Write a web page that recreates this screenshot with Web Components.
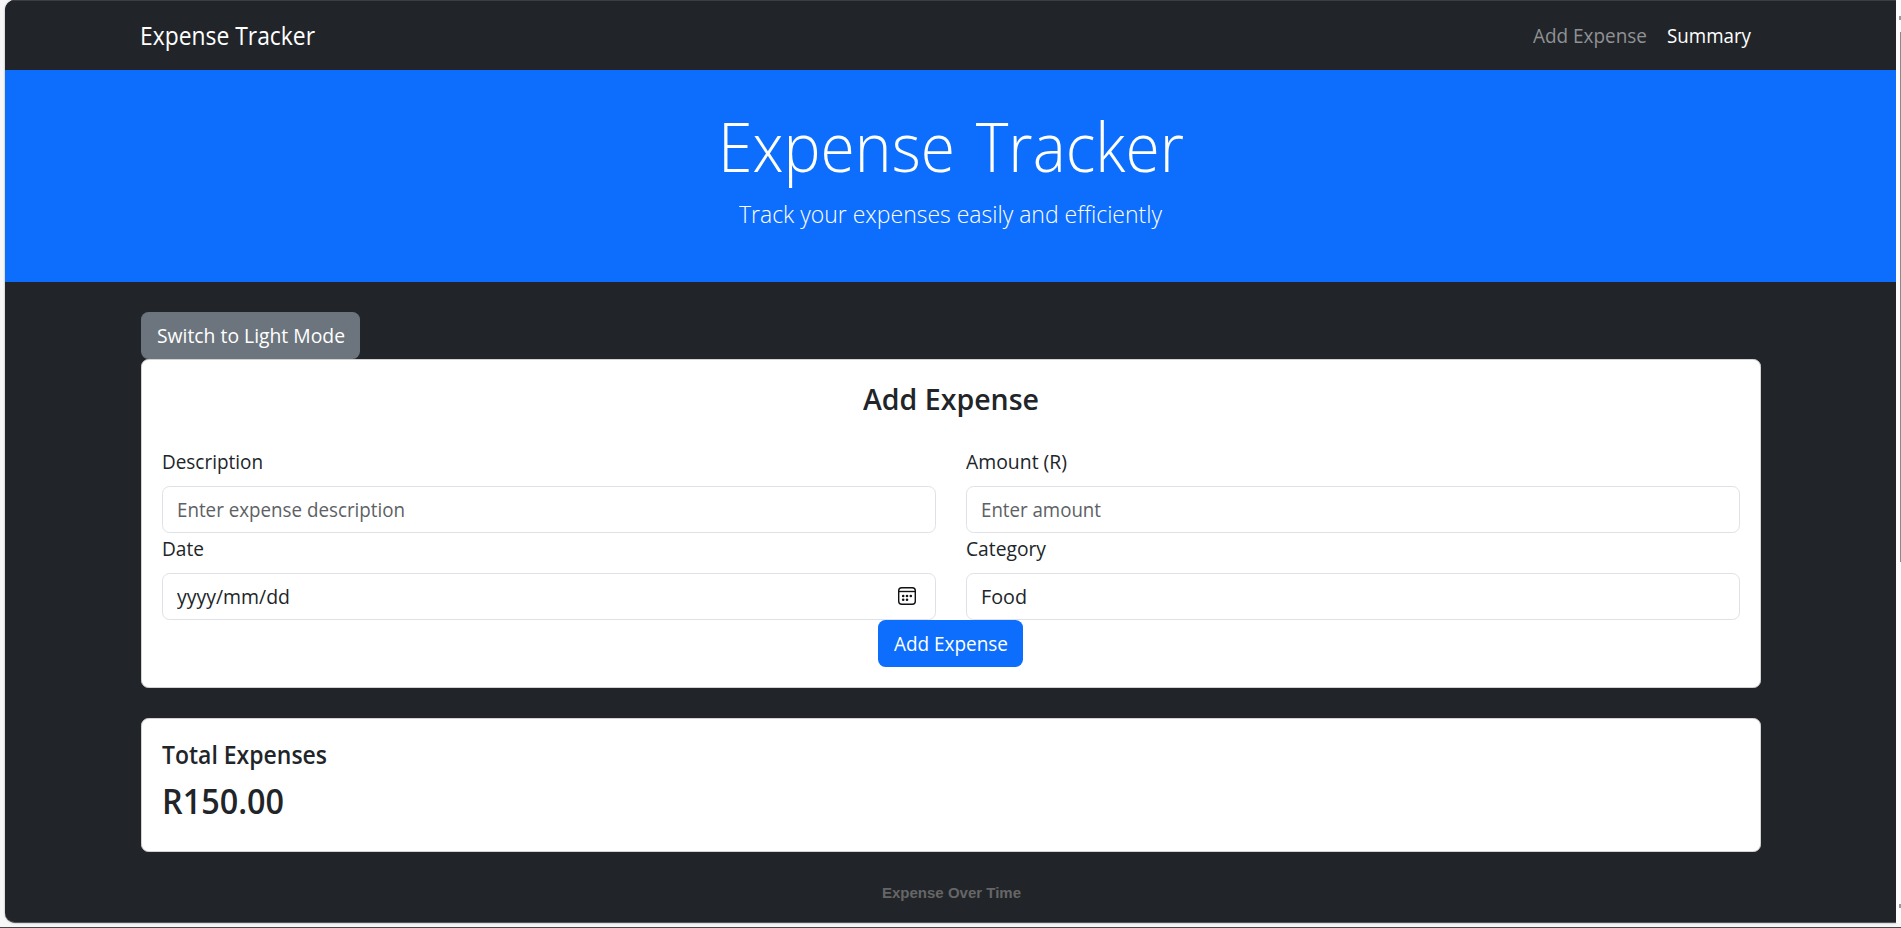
<!DOCTYPE html>
<html lang="en">
<head>
<meta charset="utf-8">
<title>Expense Tracker</title>
<style>
html,body{margin:0;height:100%;overflow:hidden;background:#f9f9f9}
body{font-family:"Open Sans","Noto Sans",sans-serif;font-size:19.6px;color:#212529}
</style>
</head>
<body>
<expense-app></expense-app>
<script>
const define=(name,html,setup)=>{
  const t=document.createElement('template');t.innerHTML=html;
  customElements.define(name,class extends HTMLElement{
    constructor(){super();this.attachShadow({mode:'open'}).append(t.content.cloneNode(true));}
    connectedCallback(){if(setup)setup(this);}
  });
};
// One line of text, condensed horizontally to span the given width.
define('fit-text','<style>:host{display:inline-block;white-space:nowrap;text-align:left}span{display:inline-block;transform-origin:0 50%}</style><span><slot></slot></span>',el=>{
  const w=+el.getAttribute('w'),s=el.shadowRoot.querySelector('span');
  el.style.width=w+'px';
  s.style.transform='scaleX('+w/s.getBoundingClientRect().width+')';
});
define('nav-bar',`<style>
:host{display:flex;justify-content:space-between;align-items:center;height:70px;box-sizing:border-box;padding:0 145px 0 135px;background:#212529;border-top:1px solid #3b3f42;color:#fff}
.brand{font-size:24.6px;line-height:38px}
nav{display:flex;gap:20px}
.muted{color:#909294}
</style>
<div class="brand"><fit-text w="175">Expense Tracker</fit-text></div>
<nav><fit-text class="muted" w="114">Add Expense</fit-text><fit-text w="84">Summary</fit-text></nav>`);
define('hero-banner',`<style>
:host{display:block;height:212px;box-sizing:border-box;padding-top:27px;background:#0d6efd;color:#fff;text-align:center;font-weight:300}
h1{margin:0;font-weight:300;font-size:69px;line-height:96px;word-spacing:5px}
p{margin:0;padding-top:2px;font-size:24.6px;line-height:38px}
</style>
<h1><fit-text w="466">Expense Tracker</fit-text></h1>
<p><fit-text w="423">Track your expenses easily and efficiently</fit-text></p>`);
define('ui-button',`<style>
:host{display:inline-flex;align-items:center;justify-content:center;height:47px;border-radius:7.5px;background:var(--bg,#0d6efd);color:#fff;box-sizing:border-box}
</style><slot></slot>`);
define('ui-card',`<style>
:host{display:block;box-sizing:border-box;background:#fff;border:1px solid #d3d3d4;border-radius:7.5px;padding:0 20px}
</style><slot></slot>`);
define('form-field',`<style>
:host{display:block;height:87px}
.label{height:40px;line-height:32px;margin-left:-.5px}
.box{display:flex;align-items:center;justify-content:space-between;height:47px;box-sizing:border-box;border:1px solid #dee2e6;border-radius:7.5px;padding:0 18px 0 14px;color:var(--c,#212529)}
</style><div class="label"><slot name="label"></slot></div><div class="box"><slot></slot></div>`);
define('calendar-icon',`<style>:host{display:block;width:20px;height:20px;margin-top:-2px}svg{display:block}</style>
<svg width="20" height="20" viewBox="0 0 20 20"><rect x="1.7" y="1.7" width="16.6" height="16.6" rx="3" fill="none" stroke="#111" stroke-width="1.4"/><path d="M2 5.5H18" stroke="#111" stroke-width="1.4"/><g fill="#111"><circle cx="6.2" cy="10" r="1.3"/><circle cx="10" cy="10" r="1.3"/><circle cx="13.8" cy="10" r="1.3"/><circle cx="6.2" cy="13.8" r="1.3"/><circle cx="10" cy="13.8" r="1.3"/></g></svg>`);
define('expense-form',`<style>
:host{display:block}
ui-card{height:329px}
h2{margin:0;padding-top:16px;height:86px;box-sizing:border-box;text-align:center;font-size:29px;line-height:45px;font-weight:600}
.grid{display:grid;grid-template-columns:1fr 1fr;column-gap:30px}
.hint{--c:#5d6165}
.action{display:flex;justify-content:center;padding-right:1px}
ui-button{width:145px}
</style>
<ui-card>
<h2><fit-text w="176">Add Expense</fit-text></h2>
<div class="grid">
<form-field class="hint"><fit-text slot="label" w="101" style="color:#212529">Description</fit-text><fit-text w="228">Enter expense description</fit-text></form-field>
<form-field class="hint"><fit-text slot="label" w="101" style="color:#212529">Amount (R)</fit-text><fit-text w="120">Enter amount</fit-text></form-field>
<form-field><fit-text slot="label" w="42">Date</fit-text><fit-text w="113">yyyy/mm/dd</fit-text><calendar-icon></calendar-icon></form-field>
<form-field><fit-text slot="label" w="80">Category</fit-text><fit-text w="46">Food</fit-text></form-field>
</div>
<div class="action"><ui-button><fit-text w="114">Add Expense</fit-text></ui-button></div>
</ui-card>`);
define('expense-total',`<style>
:host{display:block;margin-top:30px}
ui-card{height:134px}
h5,h3{margin:0 0 0 -.5px;font-weight:600}
h5{padding-top:19px;font-size:24.3px;line-height:34px}
h3{font-size:34px;line-height:48px;padding-top:5px}
</style>
<ui-card><h5><fit-text w="165">Total Expenses</fit-text></h5><h3><fit-text w="122">R150.00</fit-text></h3></ui-card>`);
define('chart-title',`<style>
:host{display:block;text-align:center;margin-top:31px;font:bold 15px/20px "Liberation Sans",Arial,sans-serif;color:#666}
</style><fit-text w="139">Expense Over Time</fit-text>`);
define('scroll-edge',`<style>
:host{display:flex;flex-direction:column;align-items:flex-end;width:5px;height:923px;box-sizing:border-box;padding:16px 0 15px;background:#fcfcfc}
i{width:2px;height:4px;background:#999}
.thumb{width:1px;height:530px;margin:12px 0 auto;background:#8a8a8a}
</style><i></i><i class="thumb"></i><i></i>`);
define('expense-app',`<style>
:host{display:flex;height:928px;box-sizing:border-box;padding:0 0 4px 5px;border-bottom:1px solid #47484a;background:#f7f7f7}
.window{flex:1;height:923px;box-sizing:border-box;overflow:hidden;background:#212529;border-radius:10px 0 0 10px;border-bottom:1px solid #55585b;box-shadow:0 0 2px #999}
main{padding:30px 135px 0 136px}
ui-button{--bg:#6c757d;width:219px;display:flex}
</style>
<div class="window"><nav-bar></nav-bar><hero-banner></hero-banner>
<main><ui-button><fit-text w="188">Switch to Light Mode</fit-text></ui-button>
<expense-form></expense-form><expense-total></expense-total><chart-title></chart-title></main></div><scroll-edge></scroll-edge>`);
</script>
</body>
</html>
